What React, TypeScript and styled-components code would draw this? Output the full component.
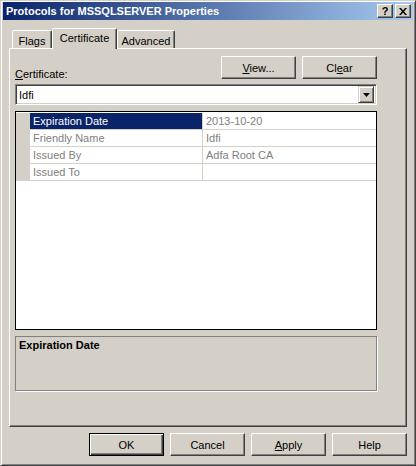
import styled, { createGlobalStyle } from "styled-components";

const face = "#d4d0c8";
const shadow = "#808080";
const dark = "#404040";
const navy = "#0a246a";

const GlobalStyle = createGlobalStyle`
    body {
        margin: 0;
        background: ${face};
        font-family: "Liberation Sans", Arial, sans-serif;
        font-size: 11px;
    }
    * { box-sizing: border-box; }
`;

const properties = [
    { name: "Expiration Date", value: "2013-10-20" },
    { name: "Friendly Name", value: "Idfi" },
    { name: "Issued By", value: "Adfa Root CA" },
    { name: "Issued To", value: "" },
];

export default function App() {
    return (
        <>
            <GlobalStyle />
            <Window>
                <TitleBar>
                    <TitleText>Protocols for MSSQLSERVER Properties</TitleText>
                    <CaptionButtons>
                        <CaptionButton>?</CaptionButton>
                        <CaptionButton $gap>
                            <svg width="8" height="7" viewBox="0 0 8 7">
                                <path d="M0 0h2l2 2.5L6 0h2L5 3.5 8 7H6L4 4.5 2 7H0l3-3.5z" fill="#000" />
                            </svg>
                        </CaptionButton>
                    </CaptionButtons>
                </TitleBar>

                <Body>
                    <TabStrip>
                        <Tab $w={40}>Flags</Tab>
                        <Tab $w={65} $active>Certificate</Tab>
                        <Tab $w={58}>Advanced</Tab>
                    </TabStrip>

                    <Panel>
                        <Content>
                            <TopRow>
                                <FieldLabel><u>C</u>ertificate:</FieldLabel>
                                <ButtonGroup>
                                    <PushButton><u>V</u>iew...</PushButton>
                                    <PushButton>Cl<u>e</u>ar</PushButton>
                                </ButtonGroup>
                            </TopRow>

                            <Combo>
                                <ComboText>Idfi</ComboText>
                                <ComboArrow>
                                    <svg width="7" height="4" viewBox="0 0 7 4">
                                        <polygon points="0,0 7,0 3.5,4" fill="#000" />
                                    </svg>
                                </ComboArrow>
                            </Combo>

                            <PropList>
                                {properties.map((p, i) => (
                                    <PropRow key={p.name}>
                                        <Gutter />
                                        <Cell $selected={i === 0} $divider>{p.name}</Cell>
                                        <Cell>{p.value}</Cell>
                                    </PropRow>
                                ))}
                            </PropList>

                            <Description>
                                <DescTitle>Expiration Date</DescTitle>
                            </Description>
                        </Content>
                    </Panel>

                    <Footer>
                        <PushButton $default>OK</PushButton>
                        <PushButton>Cancel</PushButton>
                        <PushButton><u>A</u>pply</PushButton>
                        <PushButton>Help</PushButton>
                    </Footer>
                </Body>
            </Window>
        </>
    );
}

const Window = styled.div`
    width: 416px;
    height: 466px;
    background: ${face};
    border: 1px solid;
    border-color: ${face} ${dark} ${dark} ${face};
    box-shadow: inset 1px 1px #fff, inset -1px -1px ${shadow};
    padding: 1px 2px 2px 2px;
    display: flex;
    flex-direction: column;
`;

const TitleBar = styled.div`
    height: 18px;
    background: linear-gradient(to right, ${navy}, #a6caf0);
    display: flex;
    align-items: center;
    justify-content: space-between;
    padding: 0 2px 0 3px;
`;

const TitleText = styled.span`
    color: #fff;
    font-weight: bold;
    font-size: 11px;
    white-space: nowrap;
`;

const CaptionButtons = styled.div`
    display: flex;
`;

const CaptionButton = styled.div<{ $gap?: boolean }>`
    width: 16px;
    height: 14px;
    margin-left: ${(p) => (p.$gap ? "2px" : "0")};
    background: ${face};
    border: 1px solid;
    border-color: #fff ${dark} ${dark} #fff;
    box-shadow: inset -1px -1px ${shadow};
    display: flex;
    align-items: center;
    justify-content: center;
    font-weight: bold;
    font-size: 11px;
    line-height: 1;
    color: #000;
`;

const Body = styled.div`
    flex: 1;
    display: flex;
    flex-direction: column;
    padding: 8px 6px 7px 6px;
`;

const TabStrip = styled.div`
    height: 20px;
    display: flex;
    align-items: flex-end;
    padding-left: 3px;
    position: relative;
    z-index: 1;
`;

const Tab = styled.div<{ $w: number; $active?: boolean }>`
    width: ${(p) => p.$w}px;
    height: ${(p) => (p.$active ? "21px" : "18px")};
    margin-bottom: ${(p) => (p.$active ? "-1px" : "0")};
    background: ${face};
    border: 1px solid;
    border-bottom: none;
    border-color: #fff ${dark} transparent #fff;
    border-radius: 2px 2px 0 0;
    box-shadow: inset -1px 0 ${shadow};
    display: flex;
    justify-content: center;
    padding-top: ${(p) => (p.$active ? "3px" : "4px")};
    color: #000;
    white-space: nowrap;
`;

const Panel = styled.div`
    flex: 1;
    border: 1px solid;
    border-color: #fff ${dark} ${dark} #fff;
    box-shadow: inset -1px -1px ${shadow};
    padding: 7px 0 0 5px;
`;

const Content = styled.div`
    width: 362px;
    display: flex;
    flex-direction: column;
`;

const TopRow = styled.div`
    display: flex;
    justify-content: space-between;
    align-items: flex-end;
`;

const FieldLabel = styled.span`
    line-height: 13px;
    margin-bottom: -2px;
    color: #000;
`;

const ButtonGroup = styled.div`
    display: flex;
    gap: 6px;
`;

const PushButton = styled.button<{ $default?: boolean }>`
    width: 75px;
    height: 23px;
    padding: 0;
    font: inherit;
    color: #000;
    background: ${face};
    border: 1px solid;
    border-color: ${(p) => (p.$default ? "#000" : `#fff ${dark} ${dark} #fff`)};
    box-shadow: ${(p) =>
        p.$default
            ? `inset 1px 1px #fff, inset -1px -1px ${dark}, inset -2px -2px ${shadow}`
            : `inset -1px -1px ${shadow}`};
`;

const Combo = styled.div`
    margin-top: 5px;
    height: 21px;
    background: #fff;
    border: 1px solid;
    border-color: ${shadow} #fff #fff ${shadow};
    box-shadow: inset 1px 1px ${dark}, inset -1px -1px ${face};
    display: flex;
    align-items: center;
    justify-content: space-between;
    padding: 2px;
`;

const ComboText = styled.span`
    padding-left: 1px;
    color: #000;
`;

const ComboArrow = styled.div`
    width: 16px;
    height: 17px;
    background: ${face};
    border: 1px solid;
    border-color: ${face} ${dark} ${dark} ${face};
    box-shadow: inset 1px 1px #fff, inset -1px -1px ${shadow};
    display: flex;
    align-items: center;
    justify-content: center;
`;

const PropList = styled.div`
    margin-top: 6px;
    height: 219px;
    background: #fff;
    border: 1px solid #000;
    padding-top: 1px;
`;

const PropRow = styled.div`
    display: grid;
    grid-template-columns: 14px 173px 173px;
    height: 17px;
`;

const Gutter = styled.div`
    background: ${face};
`;

const Cell = styled.div<{ $selected?: boolean; $divider?: boolean }>`
    border-bottom: 1px solid ${face};
    border-right: ${(p) => (p.$divider ? `1px solid ${face}` : "none")};
    background: ${(p) => (p.$selected ? navy : "#fff")};
    color: ${(p) => (p.$selected ? "#fff" : shadow)};
    padding: 2px 0 0 3px;
    line-height: 13px;
    white-space: nowrap;
`;

const Description = styled.div`
    margin-top: 6px;
    height: 55px;
    border: 1px solid ${shadow};
    box-shadow: 1px 1px #fff;
    padding: 2px 3px;
`;

const DescTitle = styled.div`
    font-weight: bold;
    line-height: 13px;
    color: #000;
`;

const Footer = styled.div`
    display: flex;
    justify-content: flex-end;
    gap: 6px;
    margin-top: 6px;
`;
